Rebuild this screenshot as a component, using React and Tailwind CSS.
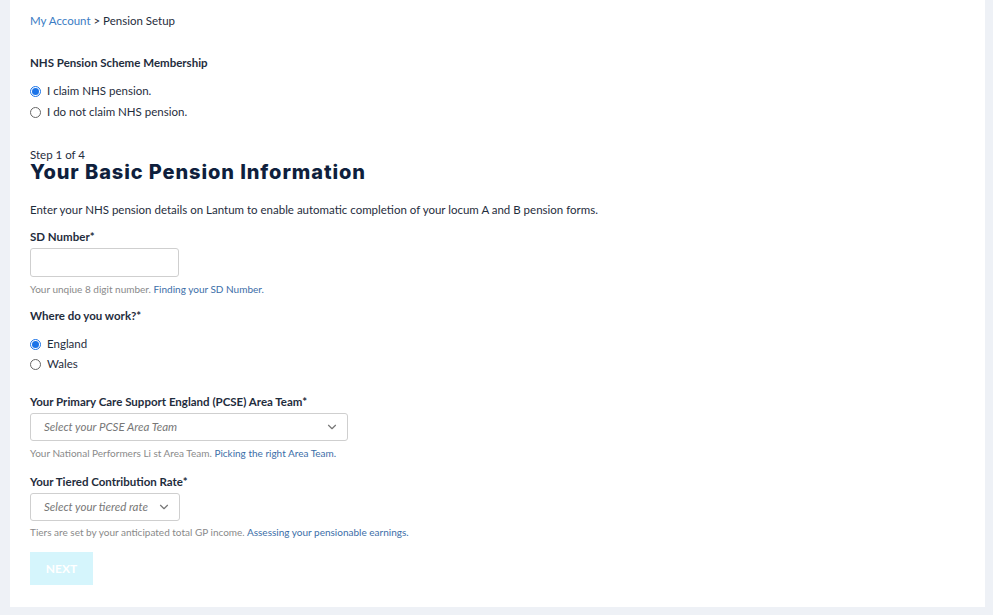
import { ChevronDown } from 'lucide-react';

function Radio({ checked, label }) {
    return (
        <label className="flex items-center gap-[6px] h-[20px] text-[11.5px] text-[#1f2d3d]">
            <span
                className={`w-[11px] h-[11px] rounded-full flex items-center justify-center ${checked ? 'border border-[#1a73e8] bg-white' : 'border border-[#666] bg-white'}`}
            >
                {checked && <span className="w-[7px] h-[7px] rounded-full bg-[#1a73e8]" />}
            </span>
            <span>{label}</span>
        </label>
    );
}

function Select({ placeholder, width }) {
    return (
        <div
            className={`${width} h-[28px] border border-[#cfcfcf] rounded-[3px] flex items-center justify-between pl-[13px] pr-[8px] bg-white`}
        >
            <span className="italic text-[11.5px] text-[#777]">{placeholder}</span>
            <ChevronDown size={14} strokeWidth={2} className="text-[#777]" />
        </div>
    );
}

export default function App() {
    return (
        <div
            className="min-h-[615px] bg-[#eef1f6] pl-[10px] pr-[8px] pb-[8px]"
            style={{ fontFamily: 'Lato, "Open Sans", sans-serif' }}
        >
            <div className="bg-white h-[607px] pl-[20px] pt-[13px]">
                <div className="text-[11.5px] leading-[16px] text-[#1f2d3d]">
                    <span className="text-[#3b7cc4]">My Account</span> &gt; Pension Setup
                </div>

                <h3 className="mt-[26px] text-[11.5px] leading-[16px] font-bold text-[#1f2d3d]">
                    NHS Pension Scheme Membership
                </h3>
                <div className="mt-[10px] flex flex-col gap-[1px]">
                    <Radio checked label="I claim NHS pension." />
                    <Radio label="I do not claim NHS pension." />
                </div>

                <div className="mt-[26px] text-[11.5px] leading-[14px] text-[#1f2d3d]">Step 1 of 4</div>
                <h1
                    className="text-[20px] leading-[20px] font-extrabold text-[#0f1f3d] tracking-[0.9px]"
                    style={{ fontFamily: 'Inter, "Noto Sans", sans-serif' }}
                >
                    Your Basic Pension Information
                </h1>

                <p className="mt-[20px] text-[11.5px] leading-[16px] text-[#1f2d3d]">
                    Enter your NHS pension details on Lantum to enable automatic completion of your locum A and B pension forms.
                </p>

                <div className="mt-[11px] text-[11.5px] leading-[16px] font-bold text-[#1f2d3d]">SD Number*</div>
                <input
                    type="text"
                    className="mt-[3px] block w-[149px] h-[29px] border border-[#cfcfcf] rounded-[3px] outline-none"
                />
                <div className="mt-[6px] text-[10px] leading-[12px] text-[#8a8a8a]">
                    Your unqiue 8 digit number. <span className="text-[#3b6ea8]">Finding your SD Number.</span>
                </div>

                <div className="mt-[13px] text-[11.5px] leading-[16px] font-bold text-[#1f2d3d]">Where do you work?*</div>
                <div className="mt-[10px] flex flex-col">
                    <Radio checked label="England" />
                    <Radio label="Wales" />
                </div>

                <div className="mt-[20px] text-[11.5px] leading-[16px] font-bold text-[#1f2d3d]">
                    Your Primary Care Support England (PCSE) Area Team*
                </div>
                <div className="mt-[3px]">
                    <Select placeholder="Select your PCSE Area Team" width="w-[318px]" />
                </div>
                <div className="mt-[6px] text-[10px] leading-[12px] text-[#8a8a8a]">
                    Your National Performers Li st Area Team. <span className="text-[#3b6ea8]">Picking the right Area Team.</span>
                </div>

                <div className="mt-[15px] text-[11.5px] leading-[16px] font-bold text-[#1f2d3d]">Your Tiered Contribution Rate*</div>
                <div className="mt-[3px]">
                    <Select placeholder="Select your tiered rate" width="w-[150px]" />
                </div>
                <div className="mt-[5px] text-[10px] leading-[12px] text-[#8a8a8a]">
                    Tiers are set by your anticipated total GP income. <span className="text-[#3b6ea8]">Assessing your pensionable earnings.</span>
                </div>

                <button className="mt-[14px] w-[63px] h-[33px] bg-[#d5f5fc] text-white text-[12px] font-bold">
                    NEXT
                </button>
            </div>
        </div>
    );
}
